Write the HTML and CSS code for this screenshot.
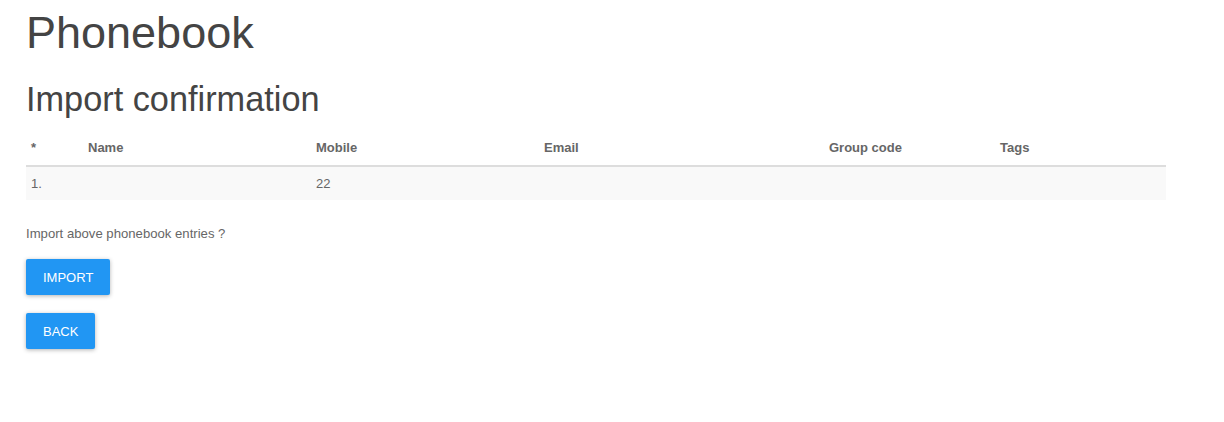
FILE: index.html
```html
<!DOCTYPE html>
<html lang="en">
<head>
    <meta charset="UTF-8">
    <title>Phonebook</title>
    <link rel="stylesheet" href="styles.css">
</head>
<body>
    <div class="container">
        <h1>Phonebook</h1>
        <h2>Import confirmation</h2>

        <table class="entries">
            <thead>
                <tr>
                    <th class="col-num">*</th>
                    <th class="col-name">Name</th>
                    <th class="col-mobile">Mobile</th>
                    <th class="col-email">Email</th>
                    <th class="col-group">Group code</th>
                    <th class="col-tags">Tags</th>
                </tr>
            </thead>
            <tbody>
                <tr>
                    <td>1.</td>
                    <td></td>
                    <td>22</td>
                    <td></td>
                    <td></td>
                    <td></td>
                </tr>
            </tbody>
        </table>

        <p class="question">Import above phonebook entries ?</p>

        <form class="actions">
            <button type="button" class="btn">Import</button>
            <button type="button" class="btn">Back</button>
        </form>
    </div>
</body>
</html>
```

FILE: styles.css
```css
body {
    margin: 0;
    font-family: "Liberation Sans", Arial, sans-serif;
    font-size: 13px;
    line-height: 1.42857;
    color: #666;
    background: #fff;
}
.container {
    width: 1140px;
    padding: 8px 26px;
}
h1, h2 {
    font-weight: 400;
    color: #444;
    line-height: 1.1;
    margin: 0;
}
h1 {
    font-size: 45px;
}
h2 {
    font-size: 34.3px;
    margin-top: 23px;
}
.entries {
    width: 100%;
    border-collapse: collapse;
    margin-top: 14px;
}
.entries th,
.entries td {
    padding: 8px 5px;
    line-height: 17px;
    text-align: left;
    vertical-align: top;
}
.entries th {
    padding-top: 7px;
    padding-bottom: 9px;
    font-weight: bold;
    border-bottom: 2px solid #ddd;
}
.entries tbody tr {
    background-color: #f9f9f9;
}
.col-num { width: 5%; }
.col-name { width: 20%; }
.col-mobile { width: 20%; }
.col-email { width: 25%; }
.col-group { width: 15%; }
.col-tags { width: 15%; }
.question {
    font-size: 13.15px;
    margin: 25px 0 15px;
}
.actions {
    display: flex;
    flex-direction: column;
    align-items: flex-start;
    gap: 18px;
}
.btn {
    height: 36px;
    padding: 0 17px;
    border: none;
    border-radius: 2px;
    background-color: #2196f3;
    color: #fff;
    font-family: inherit;
    font-size: 13px;
    text-transform: uppercase;
    box-shadow: 0 1px 4px rgba(0, 0, 0, 0.3);
    cursor: pointer;
}
```
